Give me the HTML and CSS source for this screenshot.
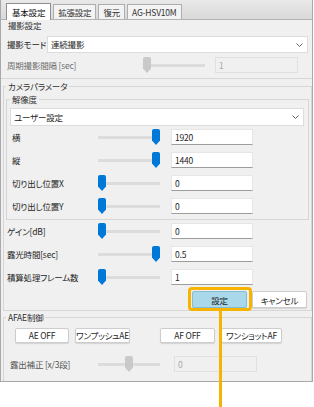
FILE: index.html
```html
<!DOCTYPE html>
<html lang="ja">
<head>
    <meta charset="UTF-8">
    <meta name="viewport" content="width=device-width, initial-scale=1.0">
    <title>基本設定</title>
    <link rel="stylesheet" href="styles.css">
</head>
<body>
    <div class="panel">
        <div class="tabbar">
            <span class="tab active">基本設定</span>
            <span class="tab">拡張設定</span>
            <span class="tab">復元</span>
            <span class="tab">AG-HSV10M</span>
        </div>

        <div class="section">
            <div class="caption">撮影設定</div>
            <div class="row mode-row">
                <span class="label mode-label">撮影モード</span>
                <div class="select mode-select">
                    <span>連続撮影</span>
                    <svg class="chevron" width="7" height="4" viewBox="0 0 7 4"><polyline points="0.5,0.5 3.5,3.5 6.5,0.5"/></svg>
                </div>
            </div>
            <div class="row">
                <span class="label period-label dim">周期撮影間隔 [sec]</span>
                <div class="slider"><span class="thumb off" style="left:0px"></span></div>
                <div class="field off period-field">1</div>
            </div>
        </div>

        <div class="group camera">
            <div class="legend">カメラパラメータ</div>
            <div class="group inner">
                <div class="legend">解像度</div>
                <div class="select res-select">
                    <span>ユーザー設定</span>
                    <svg class="chevron" width="7" height="4" viewBox="0 0 7 4"><polyline points="0.5,0.5 3.5,3.5 6.5,0.5"/></svg>
                </div>
                <div class="rows">
                    <div class="row">
                        <span class="label inner-label">横</span>
                        <div class="slider"><span class="thumb" style="left:54px"></span></div>
                        <div class="field">1920</div>
                    </div>
                    <div class="row">
                        <span class="label inner-label">縦</span>
                        <div class="slider"><span class="thumb" style="left:54px"></span></div>
                        <div class="field">1440</div>
                    </div>
                    <div class="row">
                        <span class="label inner-label">切り出し位置X</span>
                        <div class="slider"><span class="thumb" style="left:0px"></span></div>
                        <div class="field">0</div>
                    </div>
                    <div class="row">
                        <span class="label inner-label">切り出し位置Y</span>
                        <div class="slider"><span class="thumb" style="left:0px"></span></div>
                        <div class="field">0</div>
                    </div>
                </div>
            </div>
            <div class="rows outer-rows">
                <div class="row">
                    <span class="label outer-label">ゲイン[dB]</span>
                    <div class="slider"><span class="thumb" style="left:0px"></span></div>
                    <div class="field">0</div>
                </div>
                <div class="row">
                    <span class="label outer-label">露光時間[sec]</span>
                    <div class="slider"><span class="thumb" style="left:54px"></span></div>
                    <div class="field">0.5</div>
                </div>
                <div class="row">
                    <span class="label outer-label">積算処理フレーム数</span>
                    <div class="slider"><span class="thumb" style="left:0px"></span></div>
                    <div class="field">1</div>
                </div>
            </div>
            <div class="actions">
                <button class="btn apply">設定</button>
                <button class="btn">キャンセル</button>
            </div>
        </div>

        <div class="group afae">
            <div class="legend">AFAE制御</div>
            <div class="afae-buttons">
                <button class="btn small">AE OFF</button>
                <button class="btn small">ワンプッシュAE</button>
                <button class="btn small af-off">AF OFF</button>
                <button class="btn small wide">ワンショットAF</button>
            </div>
            <div class="row exposure-row">
                <span class="label exposure-label">露出補正 [x/3段]</span>
                <div class="slider"><span class="thumb off" style="left:27px"></span></div>
                <div class="field off exposure-field">0</div>
            </div>
        </div>
    </div>

    <div class="highlight"></div>
    <div class="pointer"></div>
</body>
</html>
```

FILE: styles.css
```css
* {
    box-sizing: border-box;
}
body {
    margin: 0;
    background: #fff;
    font-family: "Noto Sans CJK JP", "Noto Sans", sans-serif;
    font-size: 8.5px;
    line-height: 11px;
    letter-spacing: -0.2px;
    color: #1e1e1e;
    font-feature-settings: "palt";
}
.panel {
    width: 313px;
    height: 382px;
    background: #f0f0f0;
    border: 1px solid #a9a9a9;
    border-top: none;
}
.tabbar {
    display: flex;
    align-items: flex-end;
    gap: 2px;
    height: 20px;
    padding-left: 5px;
    background: linear-gradient(#e9e9e9, #d9d9d9);
    border-bottom: 1px solid #b4b4b4;
}
.tab {
    height: 15px;
    padding: 0 4px;
    line-height: 14px;
    white-space: nowrap;
    background: #f3f3f3;
    border: 1px solid #adadad;
    border-bottom: none;
    color: #333;
}
.tab.active {
    height: 17px;
    padding: 0 5px;
    line-height: 16px;
    margin-bottom: -1px;
    background: #fff;
    border-color: #8f8f8f;
    color: #111;
}
.section {
    padding-bottom: 5px;
    border-bottom: 1px solid #d6d6d6;
}
.caption {
    height: 11px;
    padding-left: 7px;
    color: #333;
}
.row {
    display: flex;
    align-items: center;
    height: 16px;
}
.label {
    flex: none;
    white-space: nowrap;
}
.dim {
    color: #6e6e6e;
}
.mode-row {
    height: 17px;
    margin-top: 5px;
}
.mode-label {
    width: 46px;
    padding-left: 6px;
}
.mode-select {
    width: 261px;
}
.period-label {
    width: 142px;
    padding-left: 6px;
}
.section .row + .row {
    margin-top: 4px;
}
.select {
    display: flex;
    align-items: center;
    justify-content: space-between;
    height: 17px;
    padding: 0 4px 0 3px;
    background: #fff;
    border: 1px solid #dcdcdc;
}
.chevron {
    fill: none;
    stroke: #666;
    stroke-width: 1;
}
.slider {
    position: relative;
    flex: none;
    width: 62px;
    height: 16px;
    background: linear-gradient(#dcdcdc, #dcdcdc) center / 100% 3px no-repeat;
}
.thumb {
    position: absolute;
    top: 0;
    width: 8px;
    height: 16px;
    background: #0078d7;
    border-radius: 2px 2px 0 0;
    clip-path: polygon(0 0, 100% 0, 100% 72%, 50% 100%, 0 72%);
}
.thumb.off {
    background: #c9c9c9;
}
.field {
    flex: none;
    width: 82px;
    height: 16px;
    margin-left: 11px;
    padding-left: 3px;
    line-height: 14px;
    background: #fff;
    border: 1px solid #e6e6e6;
    border-bottom-color: #9c9c9c;
}
.field.off {
    background: #f0f0f0;
    border-color: #e0e0e0;
    color: #a8a8a8;
}
.period-field {
    width: 83px;
    margin-left: 10px;
}
.group {
    border: 1px solid #d6d6d6;
}
.legend {
    width: fit-content;
    height: 11px;
    margin: -6px 0 0 2px;
    padding: 0 2px;
    background: #f0f0f0;
    color: #333;
    white-space: nowrap;
}
.camera {
    margin: 7px 0 0 2px;
    padding-bottom: 2px;
}
.inner {
    margin: 7px 2px 0 2px;
    padding-bottom: 5px;
}
.inner .legend {
    margin-left: 3px;
}
.res-select {
    height: 18px;
    margin: 3px 4px 0 3px;
}
.rows {
    display: flex;
    flex-direction: column;
    gap: 7px;
    margin-top: 3px;
}
.inner-label {
    width: 91px;
    padding-left: 5px;
}
.outer-label {
    width: 94px;
    padding-left: 3px;
}
.actions {
    display: flex;
    justify-content: flex-end;
    gap: 5px;
    margin-top: 6px;
    padding-right: 4px;
}
.btn {
    width: 55px;
    height: 17px;
    padding: 0;
    font: inherit;
    line-height: 14px;
    letter-spacing: inherit;
    white-space: nowrap;
    color: #1e1e1e;
    background: #fff;
    border: 1px solid #cdcdcd;
    border-radius: 2px;
    box-shadow: 0 1px 1px rgba(0, 0, 0, 0.12);
}
.btn.apply {
    background: #a9d8ea;
    border-color: #86bcd2;
}
.afae {
    margin: 6px 0 0 2px;
    padding-bottom: 9px;
    border-bottom: none;
}
.afae-buttons {
    display: flex;
    gap: 6px;
    height: 15px;
    margin-top: 5px;
    padding-left: 11px;
}
.btn.small {
    flex: none;
    height: 15px;
    line-height: 13px;
}
.btn.small:first-child {
    width: 54px;
}
.af-off {
    margin-left: 24px;
}
.btn.wide {
    width: 61px;
}
.exposure-row {
    margin-top: 13px;
}
.exposure-label {
    width: 94px;
    padding-left: 6px;
    color: #555;
}
.exposure-field {
    width: 83px;
    margin-left: 14px;
}
.highlight {
    position: absolute;
    left: 188px;
    top: 287px;
    width: 64px;
    height: 24px;
    border: 3px solid #f6b300;
    border-radius: 4px;
}
.pointer {
    position: absolute;
    left: 219px;
    top: 310px;
    width: 3px;
    height: 97px;
    background: #f6b300;
}
```
